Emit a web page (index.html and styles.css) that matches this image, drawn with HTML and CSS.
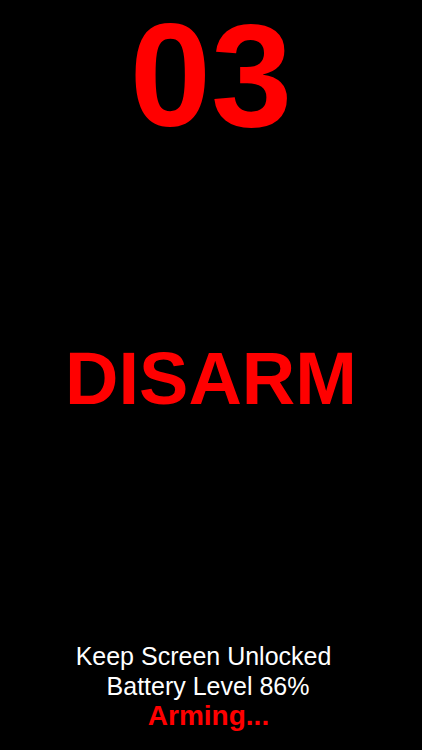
FILE: index.html
```html
<!DOCTYPE html>
<html>
<head>
<meta charset="utf-8">
<link rel="stylesheet" href="styles.css">
</head>
<body>
<main class="screen">
  <div class="count">03</div>
  <div class="disarm">DISARM</div>
  <div class="status">
    <div class="line keep">Keep Screen Unlocked</div>
    <div class="line battery">Battery Level 86%</div>
    <div class="line arming">Arming...</div>
  </div>
</main>
</body>
</html>
```
FILE: styles.css
```css
html, body {
  margin: 0;
  padding: 0;
  background: #000;
}
.screen {
  width: 422px;
  height: 750px;
  display: flex;
  flex-direction: column;
  align-items: stretch;
  font-family: "Liberation Sans", Arial, sans-serif;
  text-align: center;
  box-sizing: border-box;
  padding-bottom: 19px;
}
.count {
  margin-top: 3px;
  font-size: 146px;
  line-height: 1;
  font-weight: bold;
  color: #ff0000;
}
.disarm {
  margin-top: 193px;
  font-size: 74px;
  line-height: 1;
  font-weight: bold;
  color: #ff0000;
}
.status {
  margin-top: auto;
  display: flex;
  flex-direction: column;
}
.line {
  height: 30px;
  line-height: 30px;
  white-space: nowrap;
}
.keep {
  font-size: 25px;
  color: #fff;
  padding-right: 15px;
}
.battery {
  font-size: 25px;
  color: #fff;
  padding-right: 6px;
}
.arming {
  font-size: 28px;
  font-weight: bold;
  color: #ff0000;
  padding-right: 5px;
}
```
